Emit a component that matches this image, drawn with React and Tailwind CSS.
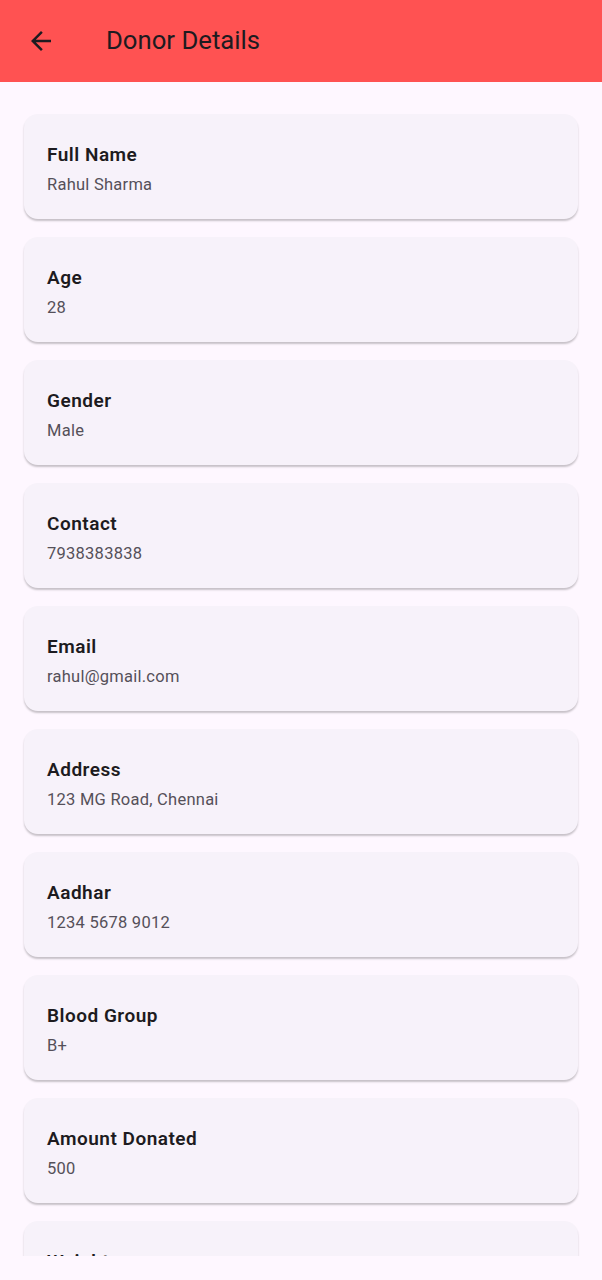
const donor = [
  { label: 'Full Name', value: 'Rahul Sharma' },
  { label: 'Age', value: '28' },
  { label: 'Gender', value: 'Male' },
  { label: 'Contact', value: '7938383838' },
  { label: 'Email', value: 'rahul@gmail.com' },
  { label: 'Address', value: '123 MG Road, Chennai' },
  { label: 'Aadhar', value: '1234 5678 9012' },
  { label: 'Blood Group', value: 'B+' },
  { label: 'Amount Donated', value: '500' },
  { label: 'Weight', value: '70' },
];

export default function App() {
  return (
    <div className="min-h-screen bg-[#fef7ff] font-['Roboto',sans-serif]">
      {/* App bar */}
      <div className="h-[82px] bg-[#ff5252] flex items-center">
        <button className="ml-[26px] w-[30px] h-[30px] flex items-center justify-center">
          <svg width="30" height="30" viewBox="0 0 24 24" fill="#1d1b20">
            <path d="M20 11H7.83l5.59-5.59L12 4l-8 8 8 8 1.41-1.41L7.83 13H20v-2z" />
          </svg>
        </button>
        <h1 className="ml-[50px] text-[25.7px] text-[#1d1b20] leading-none">Donor Details</h1>
      </div>

      {/* Details list */}
      <div className="h-[1174px] overflow-hidden">
        <div className="px-[24px] pt-[32px] flex flex-col gap-[18px]">
          {donor.map((d) => (
            <div
              key={d.label}
              className="bg-[#f7f2fa] rounded-[14px] shadow-[0_2px_2px_rgba(0,0,0,0.22)] px-[23px] pt-[29px] pb-[22px]"
            >
              <p className="text-[19px] leading-[24px] tracking-[0.5px] font-semibold text-[#1d1b20]">{d.label}</p>
              <p className="mt-[6px] text-[16.5px] leading-[24px] tracking-[0.25px] text-[#555059]">{d.value}</p>
            </div>
          ))}
        </div>
      </div>
    </div>
  );
}
